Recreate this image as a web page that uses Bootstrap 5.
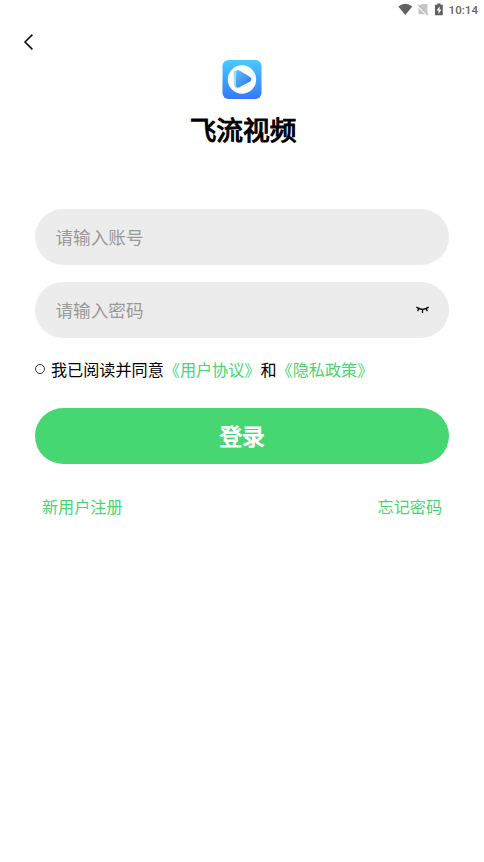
<!DOCTYPE html>
<html lang="zh-CN">
<head>
<meta charset="utf-8">
<meta name="viewport" content="width=device-width, initial-scale=1">
<title>飞流视频</title>
<link href="https://cdn.jsdelivr.net/npm/bootstrap@5.3.0/dist/css/bootstrap.min.css" rel="stylesheet">
<style>
body{font-family:Roboto,"Noto Sans CJK SC",sans-serif;color:#000;background:#fff;overflow:hidden}
svg{display:block;flex:none}
.status-bar{height:20px;padding-right:6px;font:500 11.6px/20px Roboto,sans-serif;color:#666}
.battery{margin-left:5px;margin-right:5px}
.back-row{height:40px;padding:12.5px 0 0 22px}
.app-title{font:400 26.7px/40px "Noto Sans CJK SC",sans-serif;-webkit-text-stroke:1.1px #000;margin:10px 0 0;padding-left:2px}
.login-form{padding:60px 35px 0}
.field{height:56.4px;background:#ececec;padding:0 20px 0 20.5px;margin-bottom:16.3px}
.field .form-control{font-size:17.6px;line-height:26px;font-family:"Noto Sans CJK SC",sans-serif}
.field .form-control::placeholder{color:#999;opacity:1}
.agreement{font:16.13px/24px "Noto Sans CJK SC",sans-serif;padding-top:3px;height:27px;white-space:nowrap}
.radio-dot{width:10px;height:10px;border:1px solid #333;margin-right:6px;flex:none}
.green-link,.green-link:hover{color:#46d672;text-decoration:none}
.login-btn,.login-btn:hover{height:56.5px;margin-top:26.5px;background:#46d672;color:#fff;font:400 22.6px/56px "Noto Sans CJK SC",sans-serif;-webkit-text-stroke:1px #fff;border:0}
.bottom-links{font:16.13px/24px "Noto Sans CJK SC",sans-serif;padding:0 7px;margin-top:30px}
</style>
</head>
<body>
<header class="status-bar d-flex align-items-center justify-content-end">
  <svg width="15" height="20" viewBox="0 0 15 20"><path d="M.3 6.5Q7.2 1.2 14.3 6.5L7.3 15Z" fill="#606060"/></svg>
  <svg class="ms-1" width="12" height="20" viewBox="0 0 12 20"><path d="M4.5 4H10.5V15.2L1.5 5.9Z M1.5 7.8V14.3H8.2Z" fill="#c6c6c6"/><path d="M.8 4.7 11 15" stroke="#bdbdbd" stroke-width="1.1"/></svg>
  <svg class="battery" width="10" height="20" viewBox="0 0 10 20"><path d="M3.3 3.5H6.5V4.7H8.8V15.3H1V4.7H3.3Z" fill="#606060"/><path d="M5.6 6.2 2.6 10.6H4.5V14L7.5 9.5H5.6Z" fill="#fff"/></svg>
  <span>10:14</span>
</header>
<nav class="back-row">
  <svg width="14" height="18" viewBox="0 0 14 18"><path d="M10.4 1.6 3 9l7.4 7.4" fill="none" stroke="#000" stroke-width="1.5"/></svg>
</nav>
<main>
  <div class="d-flex flex-column align-items-center">
    <svg width="40" height="39" viewBox="-.5 0 40 39">
      <defs>
        <linearGradient id="tile" x1="0" y1="0" x2="0" y2="1"><stop stop-color="#48cbff"/><stop offset="1" stop-color="#3678fc"/></linearGradient>
        <linearGradient id="play" x1="0" y1="0" x2="1" y2="1"><stop stop-color="#5fc0fb"/><stop offset="1" stop-color="#2a72ef"/></linearGradient>
      </defs>
      <rect width="39" height="39" rx="6" fill="url(#tile)"/>
      <circle cx="19.5" cy="19.5" r="14.2" fill="#fff"/>
      <path d="M11 12.5Q11 10 13.4 10.4L25 15Q28.2 17 25.6 20.5L17 27.8Q12.5 29.5 11.5 25Z" fill="#a4dcfb"/>
      <path d="M13.6 12Q13.8 9.2 17 10.4L27.8 17.3Q30 19.3 27.8 21.4L16.5 27.3Q13.6 28 13.4 25.2Z" fill="url(#play)"/>
    </svg>
    <h1 class="app-title">飞流视频</h1>
  </div>
  <form class="login-form">
    <div class="field rounded-pill d-flex align-items-center">
      <input class="form-control border-0 bg-transparent p-0 shadow-none" type="text" placeholder="请输入账号" aria-label="账号">
    </div>
    <div class="field rounded-pill d-flex align-items-center">
      <input class="form-control border-0 bg-transparent p-0 shadow-none" type="password" placeholder="请输入密码" aria-label="密码">
      <svg width="13" height="9" viewBox="0 0 13 9"><path d="M.4 2.1Q6.5 6.5 12.6 2.1M2.7 4 1.6 6.1M6.5 4.8V8M10.3 4 11.4 6.1" fill="none" stroke="#000" stroke-width="1.3"/></svg>
    </div>
    <div class="agreement d-flex align-items-center">
      <span class="radio-dot rounded-circle"></span>
      <span>我已阅读并同意<a class="green-link" href="#">《用户协议》</a>和<a class="green-link" href="#">《隐私政策》</a></span>
    </div>
    <button class="login-btn btn rounded-pill w-100 p-0 d-block" type="button">登录</button>
    <div class="bottom-links d-flex justify-content-between">
      <a class="green-link" href="#">新用户注册</a>
      <a class="green-link" href="#">忘记密码</a>
    </div>
  </form>
</main>
<script src="https://cdn.jsdelivr.net/npm/bootstrap@5.3.0/dist/js/bootstrap.bundle.min.js"></script>
</body>
</html>
